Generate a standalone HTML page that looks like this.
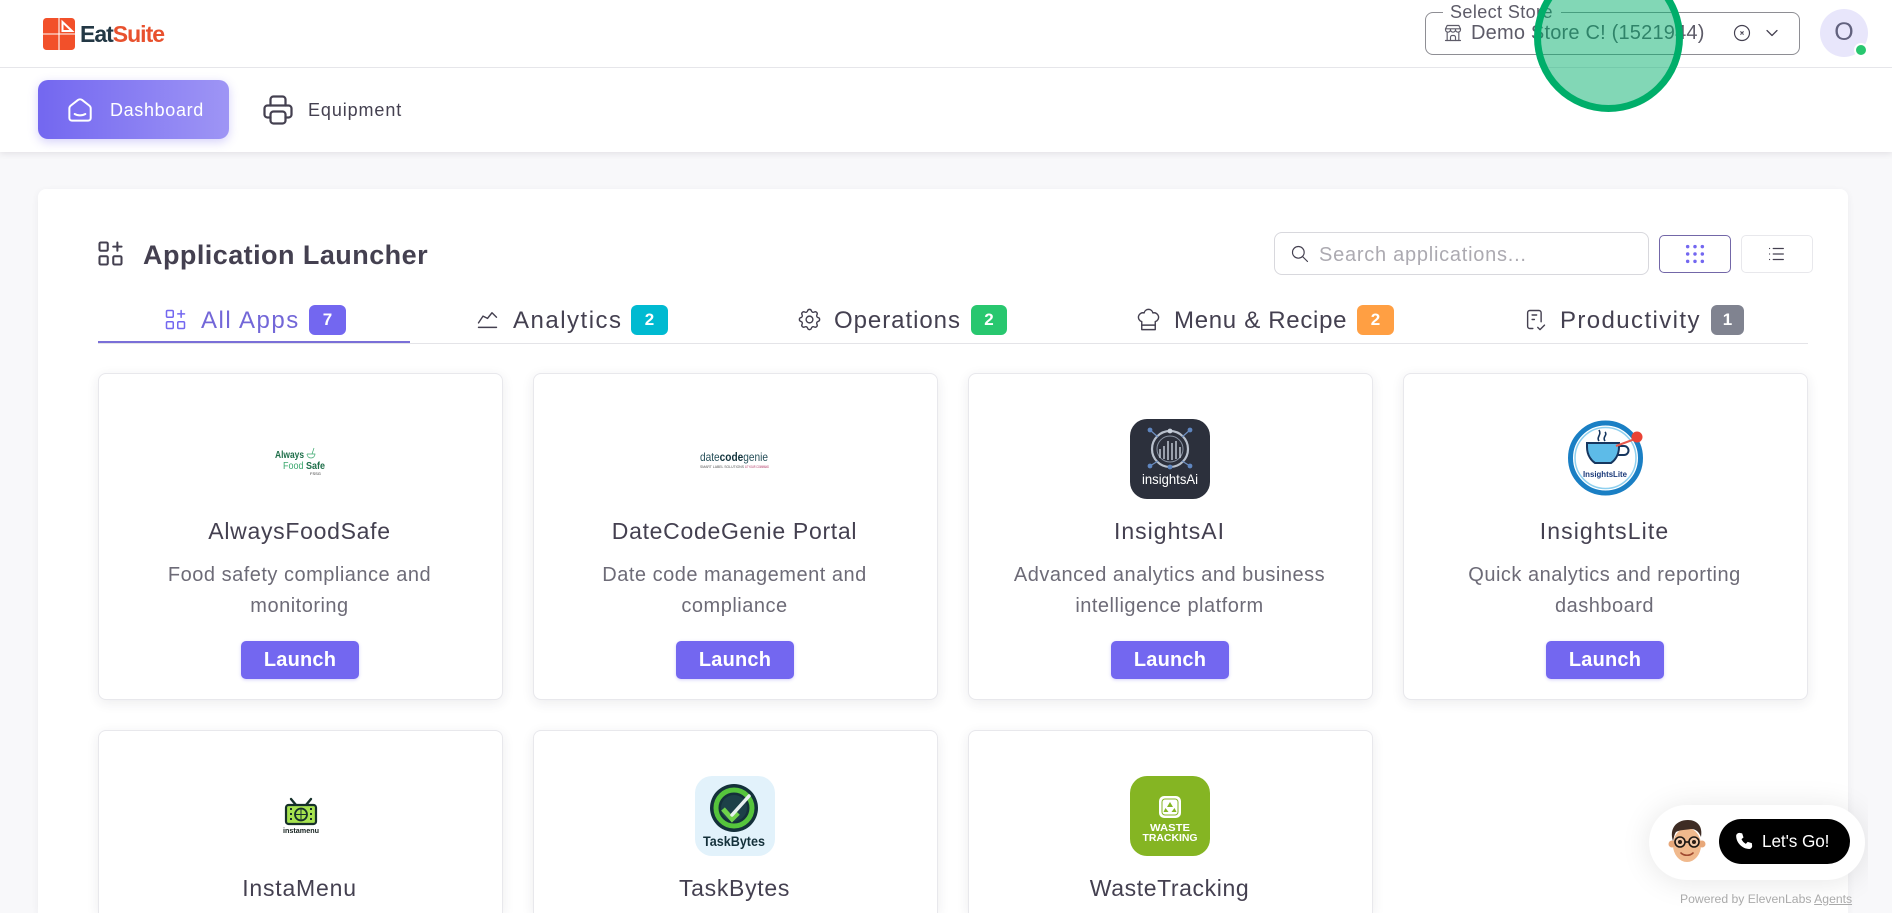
<!DOCTYPE html>
<html lang="en"><head><meta charset="utf-8"><title>Application Launcher</title>
<style>
*{box-sizing:border-box;margin:0;padding:0}
html,body{width:1892px;height:913px;overflow:hidden;background:#f8f8fa;font-family:"Liberation Sans",sans-serif;color:#444050}
#p{position:absolute;left:0;top:0;width:1892px;height:913px;overflow:hidden;background:#f8f8fa}
.a{position:absolute}
.t{position:absolute;white-space:nowrap;line-height:40px;height:40px}
svg.i{position:absolute;fill:none;stroke:currentColor;stroke-linecap:round;stroke-linejoin:round}
.card{position:absolute;width:405px;background:#fff;border:1px solid #e8e8ec;border-radius:8px;box-shadow:0 3px 12px rgba(47,43,61,.09);overflow:hidden}
.card.r2{top:730px;height:183px;border-bottom:0;border-radius:8px 8px 0 0}
.card .n,.card .d{position:absolute;left:-1px;width:100%;text-align:center;white-space:nowrap}
.card .n{top:137px;line-height:40px;font-size:23px;color:#444050;letter-spacing:.7px}
.card .d{font-size:20px;color:#6d6b77;letter-spacing:.5px;line-height:30px}
.card .d1{top:186px}.card .d2{top:217px}
.btn{position:absolute;top:267px;left:142px;width:118px;height:38px;border-radius:5px;background:#7367f0;color:#fff;font-size:20px;font-weight:700;text-align:center;line-height:39px;letter-spacing:.2px;box-shadow:0 1px 3px rgba(115,103,240,.3)}
.badge{position:absolute;top:305px;height:30px;border-radius:6px;color:#fff;font-size:17px;font-weight:700;text-align:center;line-height:30px}
.tab{font-size:24px;top:300.5px;color:#444050}
.logo{position:absolute;filter:blur(.35px)}
</style></head><body><div id="p">

<!-- header -->
<div class="a" style="left:0;top:0;width:1892px;height:152px;background:#fff;box-shadow:0 2px 6px rgba(47,43,61,.1)"></div>
<div class="a" style="left:0;top:67px;width:1892px;height:1px;background:#e6e6ea"></div>

<!-- logo -->
<svg class="a" style="left:42px;top:17px" width="34" height="34" viewBox="0 0 34 34">
<rect x="1" y="1" width="32" height="32" rx="3.5" fill="#f2502a"/>
<path d="M1 17H33M17 1V33" stroke="#fff" stroke-width="1.1"/>
<path d="M20.5 5V14H30Z" fill="none" stroke="#fff" stroke-width="2"/>
</svg>
<div class="t" style="left:80px;top:14px;font-size:23px;font-weight:700;letter-spacing:-1px;color:#233845">Eat<span style="color:#e8512e">Suite</span></div>

<!-- nav -->
<div class="a" style="left:38px;top:80px;width:191px;height:59px;border-radius:10px;background:linear-gradient(90deg,#7367f0,#9e95f5);box-shadow:0 3px 10px rgba(115,103,240,.3)"></div>
<svg class="i" style="left:64px;top:94px;color:#fff" width="32" height="32" viewBox="0 0 24 24" stroke-width="1.5"><path d="M19 8.71l-5.333 -4.148a2.666 2.666 0 0 0 -3.274 0l-5.334 4.148a2.665 2.665 0 0 0 -1.029 2.105v7.2a2 2 0 0 0 2 2h12a2 2 0 0 0 2 -2v-7.2c0 -.823 -.38 -1.6 -1.03 -2.105"/><path d="M16 15c-2.21 1.333 -5.792 1.333 -8 0"/></svg>
<div class="t" style="left:110px;top:90px;font-size:18px;letter-spacing:.65px;color:#fff">Dashboard</div>
<svg class="i" style="left:260px;top:92px;color:#444050" width="36" height="36" viewBox="0 0 24 24" stroke-width="1.5"><path d="M17 17h2a2 2 0 0 0 2 -2v-4a2 2 0 0 0 -2 -2h-14a2 2 0 0 0 -2 2v4a2 2 0 0 0 2 2h2"/><path d="M17 9v-4a2 2 0 0 0 -2 -2h-6a2 2 0 0 0 -2 2v4"/><path d="M7 13m0 2a2 2 0 0 1 2 -2h6a2 2 0 0 1 2 2v4a2 2 0 0 1 -2 2h-6a2 2 0 0 1 -2 -2z"/></svg>
<div class="t" style="left:308px;top:90px;font-size:18px;letter-spacing:.9px;color:#444050">Equipment</div>

<!-- store select -->
<div class="a" style="left:1425px;top:12px;width:375px;height:43px;border:1px solid #8e8e94;border-radius:8px"></div>
<div class="a" style="left:1443px;top:8px;width:118px;height:8px;background:#fff"></div>
<div class="t" style="left:1450px;top:-8px;font-size:18px;letter-spacing:.4px;color:#5d5b68">Select Store</div>
<svg class="i" style="left:1443px;top:23px;color:#5d5b68" width="20" height="20" viewBox="0 0 24 24" stroke-width="1.4"><path d="M3 21l18 0"/><path d="M3 7v1a3 3 0 0 0 6 0v-1m0 1a3 3 0 0 0 6 0v-1m0 1a3 3 0 0 0 6 0v-1h-18l2 -4h14l2 4"/><path d="M5 21l0 -10.15"/><path d="M19 21l0 -10.15"/><path d="M9 21v-4a2 2 0 0 1 2 -2h2a2 2 0 0 1 2 2v4"/></svg>
<div class="t" style="left:1471px;top:13px;font-size:20px;letter-spacing:.2px;color:#5d5b68">Demo Store C! (1521944)</div>
<svg class="i" style="left:1732px;top:23px;color:#444050" width="20" height="20" viewBox="0 0 24 24" stroke-width="1.4"><circle cx="12" cy="12" r="9"/><path d="M10.5 10.5l3 3m0 -3l-3 3"/></svg>
<svg class="i" style="left:1762px;top:23px;color:#444050" width="20" height="20" viewBox="0 0 24 24" stroke-width="1.5"><path d="M6 9l6 6l6 -6"/></svg>

<!-- avatar -->
<div class="a" style="left:1820px;top:9px;width:48px;height:48px;border-radius:50%;background:#e8e6fb;color:#62627e;font-size:25px;text-align:center;line-height:47px">O</div>
<div class="a" style="left:1854px;top:43px;width:14px;height:14px;border-radius:50%;background:#28c76f;border:2.5px solid #fff"></div>

<!-- main card -->
<div class="a" style="left:38px;top:189px;width:1810px;height:724px;background:#fff;border-radius:8px 8px 0 0;box-shadow:0 2px 8px rgba(47,43,61,.06)"></div>

<svg class="i" style="left:94px;top:237px;color:#444050" width="33" height="33" viewBox="0 0 24 24" stroke-width="1.5"><path d="M4 4m0 1a1 1 0 0 1 1 -1h4a1 1 0 0 1 1 1v4a1 1 0 0 1 -1 1h-4a1 1 0 0 1 -1 -1z"/><path d="M4 14m0 1a1 1 0 0 1 1 -1h4a1 1 0 0 1 1 1v4a1 1 0 0 1 -1 1h-4a1 1 0 0 1 -1 -1z"/><path d="M14 14m0 1a1 1 0 0 1 1 -1h4a1 1 0 0 1 1 1v4a1 1 0 0 1 -1 1h-4a1 1 0 0 1 -1 -1z"/><path d="M14 7l6 0"/><path d="M17 4l0 6"/></svg>
<div class="t" style="left:143px;top:234.5px;font-size:27px;font-weight:700;letter-spacing:.45px;color:#444050">Application Launcher</div>

<!-- search -->
<div class="a" style="left:1274px;top:232px;width:375px;height:43px;border:1px solid #d8d8dd;border-radius:8px"></div>
<svg class="i" style="left:1290px;top:244px;color:#444050" width="20" height="20" viewBox="0 0 24 24" stroke-width="1.4"><circle cx="10" cy="10" r="7"/><path d="M21 21l-6 -6"/></svg>
<div class="t" style="left:1319px;top:234.5px;font-size:20px;letter-spacing:.75px;color:#acaab1">Search applications...</div>
<div class="a" style="left:1659px;top:235px;width:72px;height:38px;border:1px solid #7367a8;border-radius:5px"></div>
<svg class="a" style="left:1684px;top:243px" width="22" height="22" viewBox="0 0 24 24" fill="#7367f0"><circle cx="4" cy="4" r="1.9"/><circle cx="12" cy="4" r="1.9"/><circle cx="20" cy="4" r="1.9"/><circle cx="4" cy="12" r="1.9"/><circle cx="12" cy="12" r="1.9"/><circle cx="20" cy="12" r="1.9"/><circle cx="4" cy="20" r="1.9"/><circle cx="12" cy="20" r="1.9"/><circle cx="20" cy="20" r="1.9"/></svg>
<div class="a" style="left:1741px;top:235px;width:72px;height:38px;border:1px solid #e8e8ec;border-radius:5px"></div>
<svg class="i" style="left:1765px;top:243px;color:#444050" width="22" height="22" viewBox="0 0 24 24" stroke-width="1.3"><path d="M9 6h11M9 12h11M9 18h11M5 6v.01M5 12v.01M5 18v.01"/></svg>

<!-- tabs -->
<div class="a" style="left:98px;top:343px;width:1710px;height:1px;background:#e4e4e8"></div>
<div class="a" style="left:98px;top:341px;width:312px;height:2px;background:#7a6fd8"></div>

<svg class="i" style="left:162px;top:306px;color:#7367f0" width="27" height="27" viewBox="0 0 24 24" stroke-width="1.35"><path d="M4 4m0 1a1 1 0 0 1 1 -1h4a1 1 0 0 1 1 1v4a1 1 0 0 1 -1 1h-4a1 1 0 0 1 -1 -1z"/><path d="M4 14m0 1a1 1 0 0 1 1 -1h4a1 1 0 0 1 1 1v4a1 1 0 0 1 -1 1h-4a1 1 0 0 1 -1 -1z"/><path d="M14 14m0 1a1 1 0 0 1 1 -1h4a1 1 0 0 1 1 1v4a1 1 0 0 1 -1 1h-4a1 1 0 0 1 -1 -1z"/><path d="M14 7l6 0"/><path d="M17 4l0 6"/></svg>
<div class="t tab" style="left:201px;letter-spacing:1.5px;color:#7367d8">All Apps</div>
<div class="badge" style="left:309px;width:37px;background:#7367f0">7</div>

<svg class="i" style="left:474px;top:306px;color:#444050" width="27" height="27" viewBox="0 0 24 24" stroke-width="1.25"><path d="M4 19l16 0"/><path d="M4 15l4 -6l4 2l4 -5l4 4"/></svg>
<div class="t tab" style="left:513px;letter-spacing:1.5px">Analytics</div>
<div class="badge" style="left:631px;width:37px;background:#00bad1">2</div>

<svg class="i" style="left:796px;top:306px;color:#444050" width="27" height="27" viewBox="0 0 24 24" stroke-width="1.25"><path d="M10.325 4.317c.426 -1.756 2.924 -1.756 3.35 0a1.724 1.724 0 0 0 2.573 1.066c1.543 -.94 3.31 .826 2.37 2.37a1.724 1.724 0 0 0 1.065 2.572c1.756 .426 1.756 2.924 0 3.35a1.724 1.724 0 0 0 -1.066 2.573c.94 1.543 -.826 3.31 -2.37 2.37a1.724 1.724 0 0 0 -2.572 1.065c-.426 1.756 -2.924 1.756 -3.35 0a1.724 1.724 0 0 0 -2.573 -1.066c-1.543 .94 -3.31 -.826 -2.37 -2.37a1.724 1.724 0 0 0 -1.065 -2.572c-1.756 -.426 -1.756 -2.924 0 -3.35a1.724 1.724 0 0 0 1.066 -2.573c-.94 -1.543 .826 -3.31 2.37 -2.37c1 .608 2.296 .07 2.572 -1.065z"/><circle cx="12" cy="12" r="3"/></svg>
<div class="t tab" style="left:834px;letter-spacing:.95px">Operations</div>
<div class="badge" style="left:971px;width:36px;background:#28c76f">2</div>

<svg class="i" style="left:1135px;top:306px;color:#444050" width="27" height="27" viewBox="0 0 24 24" stroke-width="1.25"><path d="M12 3c1.918 0 3.52 1.35 3.91 3.151a4 4 0 0 1 2.09 7.723l0 7.126h-12v-7.126a4 4 0 1 1 2.092 -7.723a4 4 0 0 1 3.908 -3.151z"/><path d="M6.161 17.009l11.839 -.009"/></svg>
<div class="t tab" style="left:1174px;letter-spacing:.7px">Menu &amp; Recipe</div>
<div class="badge" style="left:1357px;width:37px;background:#ff9f43">2</div>

<svg class="i" style="left:1522px;top:306px;color:#444050" width="27" height="27" viewBox="0 0 24 24" stroke-width="1.25"><path d="M9.615 20h-2.615a2 2 0 0 1 -2 -2v-12a2 2 0 0 1 2 -2h8a2 2 0 0 1 2 2v8"/><path d="M14 19l2 2l4 -4"/><path d="M9 8h4"/><path d="M9 12h2"/></svg>
<div class="t tab" style="left:1560px;letter-spacing:1.4px">Productivity</div>
<div class="badge" style="left:1711px;width:33px;background:#808390">1</div>

<!-- row 1 -->
<div class="card" style="left:98px;top:373px;height:327px">
  <svg class="logo" style="left:175px;top:73px" width="54" height="30" viewBox="0 0 54 30">
    <text x="1" y="11" font-size="10" font-family="Liberation Sans" fill="#1f6f4a" font-weight="700" textLength="29" lengthAdjust="spacingAndGlyphs">Always</text>
    <text x="9" y="22" font-size="10" font-family="Liberation Sans" fill="#3aa76d" textLength="42" lengthAdjust="spacingAndGlyphs">Food <tspan font-weight="700" fill="#1f6f4a">Safe</tspan></text>
    <path d="M33 7a4 4 0 0 0 8 0h-8M38 7l2-6" fill="none" stroke="#3aa76d" stroke-width=".7"/>
    <text x="36" y="28" font-size="4" font-family="Liberation Sans" fill="#333">FSSG</text>
  </svg>
  <div class="n">AlwaysFoodSafe</div>
  <div class="d d1">Food safety compliance and</div>
  <div class="d d2">monitoring</div>
  <div class="btn">Launch</div>
</div>

<div class="card" style="left:533px;top:373px;height:327px">
  <svg class="logo" style="left:165px;top:76px" width="72" height="22" viewBox="0 0 72 22">
    <text x="1" y="11" font-size="12" font-family="Liberation Sans" fill="#27505a" textLength="68" lengthAdjust="spacingAndGlyphs">date<tspan font-weight="700" fill="#12333c">code</tspan>genie</text>
    <text x="1" y="18" font-size="4" font-family="Liberation Sans" fill="#555" textLength="44" lengthAdjust="spacingAndGlyphs">SMART LABEL SOLUTIONS</text>
    <text x="46" y="18" font-size="4" font-family="Liberation Sans" fill="#b03060" textLength="24" lengthAdjust="spacingAndGlyphs">AT YOUR COMMAND</text>
  </svg>
  <div class="n">DateCodeGenie Portal</div>
  <div class="d d1">Date code management and</div>
  <div class="d d2">compliance</div>
  <div class="btn">Launch</div>
</div>

<div class="card" style="left:968px;top:373px;height:327px">
  <svg class="logo" style="left:161px;top:45px" width="80" height="80" viewBox="0 0 80 80">
    <rect width="80" height="80" rx="17" fill="#2c303c"/>
    <circle cx="40" cy="30" r="18" fill="none" stroke="#b8c0cc" stroke-width="2.2"/>
    <circle cx="40" cy="30" r="13" fill="none" stroke="#8a94a4" stroke-width="1"/>
    <path d="M30 39V30M34 40V27M38 41V22M42 41V24M46 40V22M50 39V28" stroke="#c8d0dc" stroke-width="1.4"/>
    <path d="M20 11L28 18M60 11L52 18M20 47L28 42M60 47L52 42" stroke="#6f8fbf" stroke-width="1.2"/>
    <circle cx="20" cy="11" r="2.4" fill="#5f86c0"/><circle cx="60" cy="11" r="2.4" fill="#5f86c0"/><circle cx="20" cy="47" r="2.4" fill="#5f86c0"/><circle cx="60" cy="47" r="2.4" fill="#5f86c0"/><circle cx="40" cy="12" r="2.4" fill="#c8d0dc"/><circle cx="40" cy="48" r="2.4" fill="#5f86c0"/>
    <text x="40" y="65" text-anchor="middle" font-size="14" font-family="Liberation Sans" fill="#fff" textLength="56" lengthAdjust="spacingAndGlyphs">insightsAi</text>
  </svg>
  <div class="n" style="letter-spacing:1px">InsightsAI</div>
  <div class="d d1">Advanced analytics and business</div>
  <div class="d d2">intelligence platform</div>
  <div class="btn">Launch</div>
</div>

<div class="card" style="left:1403px;top:373px;height:327px">
  <svg class="logo" style="left:162px;top:45px" width="80" height="80" viewBox="0 0 80 80">
    <circle cx="39.5" cy="39" r="35" fill="none" stroke="#1a7fc4" stroke-width="5"/>
    <circle cx="39.5" cy="39" r="30.5" fill="none" stroke="#8fd0ef" stroke-width="1.5"/>
    <path d="M21 24h32v4c0 9-5 14-8 16h-16c-3-2-8-7-8-16z" fill="#5dbbe8" stroke="#16365f" stroke-width="2"/>
    <path d="M53 27h5a4 4 0 0 1 0 9h-7" fill="none" stroke="#16365f" stroke-width="2"/>
    <path d="M33 22c-3-4 3-6 0-11M39 22c-3-4 3-6 0-9" fill="none" stroke="#16365f" stroke-width="1.6"/>
    <path d="M50 27L69 20" stroke="#e8584c" stroke-width="2"/>
    <circle cx="71" cy="18" r="5.5" fill="#ea4335"/>
    <text x="39" y="58" text-anchor="middle" font-size="8" font-weight="700" font-family="Liberation Sans" fill="#1b3a7a" textLength="44" lengthAdjust="spacingAndGlyphs">InsightsLite</text>
  </svg>
  <div class="n" style="letter-spacing:1.1px">InsightsLite</div>
  <div class="d d1">Quick analytics and reporting</div>
  <div class="d d2">dashboard</div>
  <div class="btn">Launch</div>
</div>

<!-- row 2 -->
<div class="card r2" style="left:98px">
  <svg class="logo" style="left:182px;top:66px" width="40" height="38" viewBox="0 0 40 38">
    <path d="M15 8L10 2M25 8L30 2" stroke="#16302a" stroke-width="2.4" stroke-linecap="round"/>
    <rect x="5" y="8" width="30" height="19" rx="2.5" fill="#a6e34f" stroke="#16302a" stroke-width="2.2"/>
    <circle cx="20" cy="17.5" r="6" fill="none" stroke="#16302a" stroke-width="1.8"/>
    <path d="M14 17.5h12M20 12v11" stroke="#16302a" stroke-width="1"/>
    <path d="M9 12h2M9 17h2M9 22h2M29 12h2M29 17h2M29 22h2" stroke="#16302a" stroke-width="2"/>
    <text x="20" y="36" text-anchor="middle" font-size="7.5" font-weight="700" font-family="Liberation Sans" fill="#14201e" textLength="36" lengthAdjust="spacingAndGlyphs">instamenu</text>
  </svg>
  <div class="n" style="letter-spacing:.8px">InstaMenu</div>
</div>

<div class="card r2" style="left:533px">
  <svg class="logo" style="left:161px;top:45px" width="80" height="80" viewBox="0 0 80 80">
    <rect width="80" height="80" rx="17" fill="#e2f2fb"/>
    <circle cx="39" cy="32" r="24" fill="#14303a"/>
    <circle cx="39" cy="32" r="18" fill="none" stroke="#56c43c" stroke-width="5"/>
    <circle cx="39" cy="32" r="13" fill="#1d4048"/>
    <path d="M28 33L37 43L43 37" fill="none" stroke="#6fd14a" stroke-width="5"/>
    <path d="M37 39L54 20" stroke="#e8f0f0" stroke-width="3.5" stroke-linecap="round"/>
    <text x="39" y="70" text-anchor="middle" font-size="14" font-weight="700" font-family="Liberation Sans" fill="#14303a" textLength="62" lengthAdjust="spacingAndGlyphs">TaskBytes</text>
  </svg>
  <div class="n" style="letter-spacing:.7px">TaskBytes</div>
</div>

<div class="card r2" style="left:968px">
  <svg class="logo" style="left:161px;top:45px" width="80" height="80" viewBox="0 0 80 80">
    <rect width="80" height="80" rx="17" fill="#85b523"/>
    <rect x="29" y="20" width="22" height="22" rx="5" fill="#fff"/>
    <rect x="32" y="23" width="16" height="16" rx="3" fill="none" stroke="#85b523" stroke-width="1"/>
    <path d="M40 26l3 5h-6zM35.5 32l-2 4h5zM44.5 32l2 4h-5z" fill="#85b523"/>
    <text x="40" y="55" text-anchor="middle" font-size="10" font-weight="700" font-family="Liberation Sans" fill="#fff" textLength="40" lengthAdjust="spacingAndGlyphs">WASTE</text>
    <text x="40" y="65" text-anchor="middle" font-size="10" font-weight="700" font-family="Liberation Sans" fill="#fff" textLength="55" lengthAdjust="spacingAndGlyphs">TRACKING</text>
  </svg>
  <div class="n" style="letter-spacing:.6px">WasteTracking</div>
</div>

<!-- voice widget -->
<div class="a" style="left:1600px;top:771px;width:268px;height:142px;overflow:hidden">
  <div class="a" style="left:49px;top:34px;width:216px;height:75px;border-radius:38px;background:#fff;box-shadow:0 2px 30px rgba(0,0,0,.1)"></div>
  <svg class="a" style="left:68px;top:48px" width="38" height="46" viewBox="0 0 38 46">
    <ellipse cx="19" cy="26" rx="14" ry="17" fill="#f0b98d"/>
    <circle cx="4" cy="25" r="3.5" fill="#e8a87a"/><circle cx="34" cy="25" r="3.5" fill="#e8a87a"/>
    <path d="M5 22C1 10 8 1 20 1c9 0 15 6 13 17c-2-5-5-8-10-8c-6 1-12 1-15 3c-2 3-2 6-3 9z" fill="#3e2c24"/>
    <circle cx="12" cy="23" r="5" fill="#f0c8a8" stroke="#1c1714" stroke-width="1.6"/>
    <circle cx="26" cy="23" r="5" fill="#f0c8a8" stroke="#1c1714" stroke-width="1.6"/>
    <path d="M17 23h4" stroke="#1c1714" stroke-width="1.6"/>
    <circle cx="12" cy="23" r="2" fill="#2a1c14"/><circle cx="26" cy="23" r="2" fill="#2a1c14"/>
    <path d="M13 34c3 3 9 3 12 0" fill="none" stroke="#a04a30" stroke-width="1.6" stroke-linecap="round"/>
  </svg>
  <div class="a" style="left:119px;top:48px;width:131px;height:45px;border-radius:23px;background:#000"></div>
  <svg class="a" style="left:134px;top:60px" width="20" height="20" viewBox="0 0 24 24" fill="#fff"><path d="M6.6 2.2l3.2 0.6 1.6 5-2.4 2c1 2.4 2.8 4.4 5.2 5.6l2.2-2.4 5 1.6 .4 3.4c.1 1.5-1.4 3.6-3.4 3.6C9.8 21.6 2.4 13.8 2.6 5.6c0-1.8 2.3-3.6 4-3.4z"/></svg>
  <div class="t" style="left:162px;top:50px;font-size:17.2px;color:#fff;letter-spacing:-.1px">Let's Go!</div>
  <div class="t" style="left:80px;top:102px;font-size:12.2px;color:#aaa;letter-spacing:0;height:40px;line-height:52px;overflow:hidden">Powered by ElevenLabs <span style="text-decoration:underline">Agents</span></div>
</div>

<!-- green highlight -->
<div class="a" style="left:1534px;top:-37px;width:149px;height:149px;border-radius:50%;background:rgba(0,173,107,.49);border:7px solid #00ae6a"></div>

</div></body></html>
